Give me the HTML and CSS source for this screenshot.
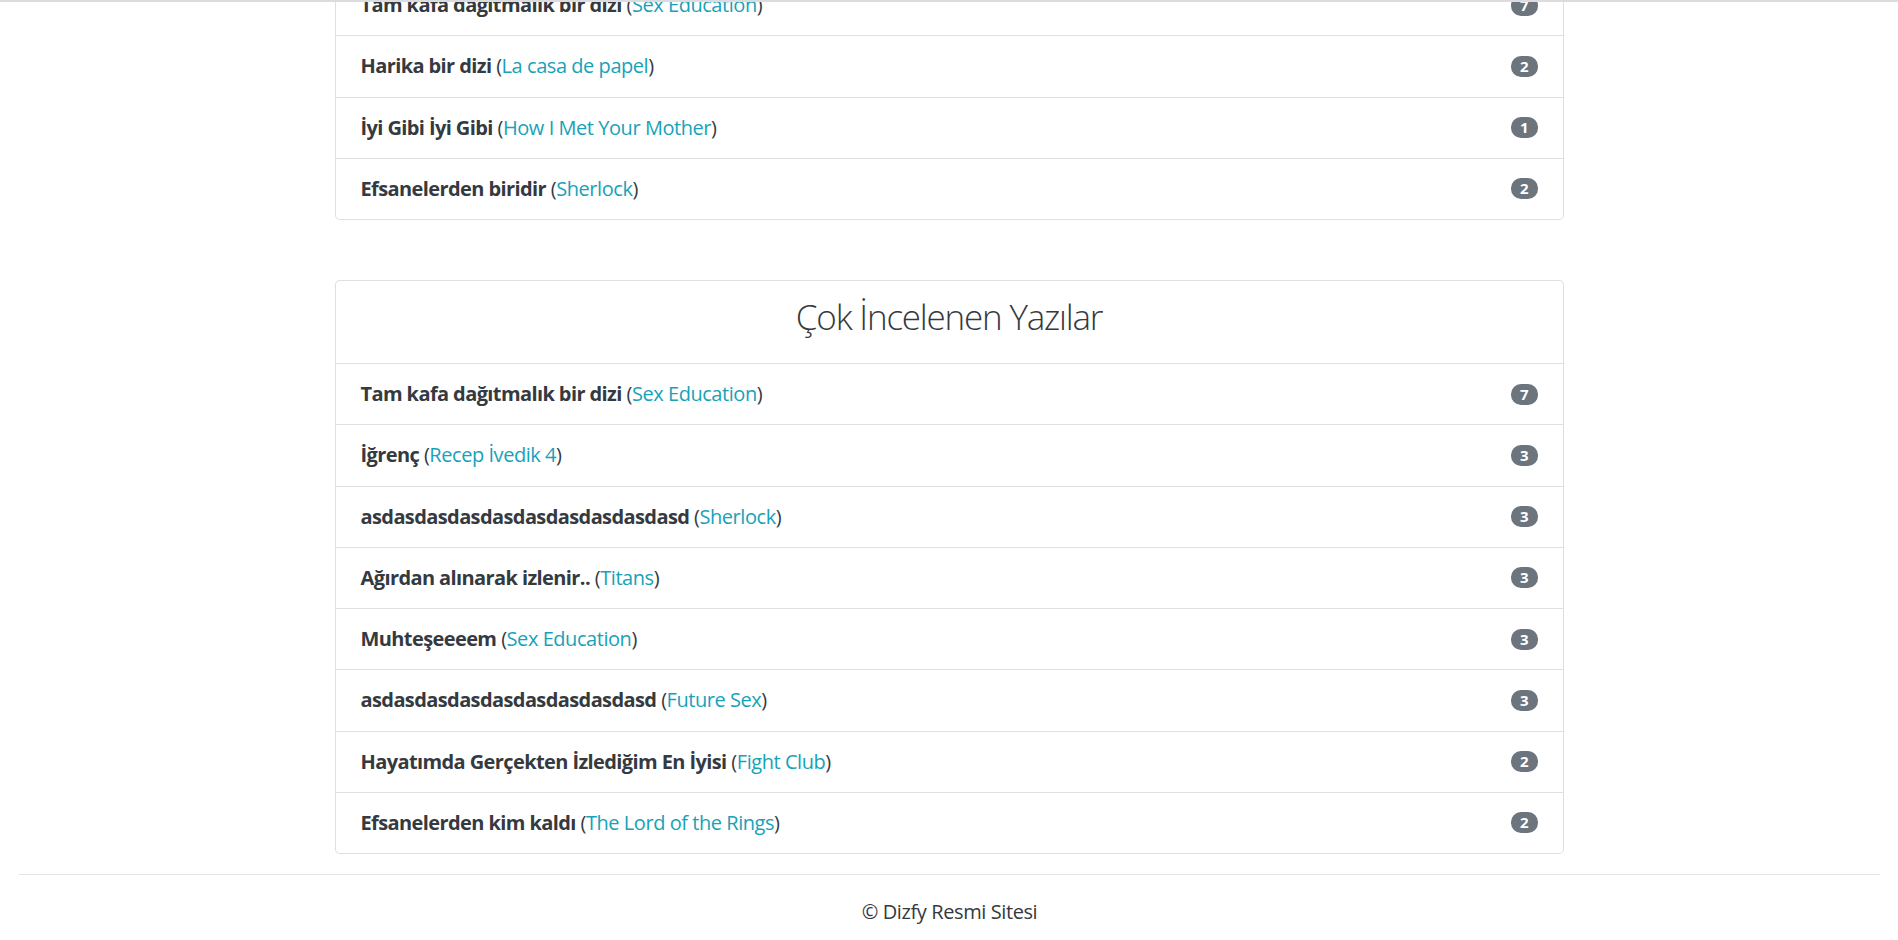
FILE: index.html
```html
<!DOCTYPE html>
<html lang="tr">
<head>
<meta charset="utf-8">
<title>Dizfy</title>
<link rel="stylesheet" href="styles.css">
</head>
<body>
<div class="topline"></div>
<div class="page">
  <main class="content">
    <section class="card">
      <ul class="list">
        <li class="item"><span class="entry"><b>Tam kafa dağıtmalık bir dizi</b> (<a href="#">Sex Education</a>)</span><span class="badge">7</span></li>
        <li class="item"><span class="entry"><b>Harika bir dizi</b> (<a href="#">La casa de papel</a>)</span><span class="badge">2</span></li>
        <li class="item"><span class="entry"><b>İyi Gibi İyi Gibi</b> (<a href="#">How I Met Your Mother</a>)</span><span class="badge">1</span></li>
        <li class="item"><span class="entry"><b>Efsanelerden biridir</b> (<a href="#">Sherlock</a>)</span><span class="badge">2</span></li>
      </ul>
    </section>
    <section class="card card-gap">
      <header class="card-header"><h3 class="card-title">Çok İncelenen Yazılar</h3></header>
      <ul class="list">
        <li class="item"><span class="entry"><b>Tam kafa dağıtmalık bir dizi</b> (<a href="#">Sex Education</a>)</span><span class="badge">7</span></li>
        <li class="item"><span class="entry"><b>İğrenç</b> (<a href="#">Recep İvedik 4</a>)</span><span class="badge">3</span></li>
        <li class="item"><span class="entry"><b>asdasdasdasdasdasdasdasdasdasd</b> (<a href="#">Sherlock</a>)</span><span class="badge">3</span></li>
        <li class="item"><span class="entry"><b>Ağırdan alınarak izlenir..</b> (<a href="#">Titans</a>)</span><span class="badge">3</span></li>
        <li class="item"><span class="entry"><b>Muhteşeeeem</b> (<a href="#">Sex Education</a>)</span><span class="badge">3</span></li>
        <li class="item"><span class="entry"><b>asdasdasdasdasdasdasdasdasd</b> (<a href="#">Future Sex</a>)</span><span class="badge">3</span></li>
        <li class="item"><span class="entry"><b>Hayatımda Gerçekten İzlediğim En İyisi</b> (<a href="#">Fight Club</a>)</span><span class="badge">2</span></li>
        <li class="item"><span class="entry"><b>Efsanelerden kim kaldı</b> (<a href="#">The Lord of the Rings</a>)</span><span class="badge">2</span></li>
      </ul>
    </section>
  </main>
  <footer class="footer">
    <hr class="rule">
    <p class="copy">© Dizfy Resmi Sitesi</p>
  </footer>
</div>
</body>
</html>
```
FILE: styles.css
```css
* { box-sizing: border-box; }
html, body { margin: 0; padding: 0; }
body {
  font-family: "Open Sans", "Noto Sans", "Liberation Sans", sans-serif;
  font-size: 20px;
  line-height: 1.5;
  color: #343a40;
  background: #fff;
  height: 940px;
  overflow: hidden;
}
.topline {
  position: fixed;
  top: 0; left: 0; right: 0;
  height: 2px;
  background: #dcdcde;
  z-index: 10;
}
.page {
  height: 940px;
  display: flex;
  flex-direction: column;
  justify-content: flex-end;
  overflow: hidden;
}
.content, .footer { flex-shrink: 0; }
.content {
  width: 1229px;
  margin: 0 auto;
}
.card {
  border: 1px solid rgba(0,0,0,.125);
  border-radius: 5px;
  background: #fff;
}
.card-gap { margin-top: 60px; }
.card-header {
  padding: 15px 25px;
  border-bottom: 1px solid rgba(0,0,0,.125);
  text-align: center;
}
.card-title {
  margin: 0 0 10px;
  font-size: 35px;
  font-weight: 300;
  line-height: 1.2;
  color: #343a40;
  letter-spacing: -1.2px;
}
.list { list-style: none; margin: 0; padding: 0; }
.item {
  display: flex;
  align-items: center;
  justify-content: space-between;
  padding: 15px 25px;
  border-top: 1px solid rgba(0,0,0,.125);
  height: 61.25px;
}
.list .item:first-child { border-top: 0; height: 60.25px; }
.entry { letter-spacing: -0.45px; }
.entry b { font-weight: 700; letter-spacing: -0.6px; }
.entry a { color: #17a2b8; text-decoration: none; }
.badge {
  display: inline-block;
  background: #6c757d;
  color: #fff;
  font-size: 15px;
  font-weight: 700;
  line-height: 1;
  padding: 3px 9px;
  border-radius: 10px;
  min-width: 26px;
  text-align: center;
}
.footer { padding: 0 18px 0 19px; }
.rule {
  margin: 20px 0 22px;
  border: 0;
  border-top: 1px solid rgba(0,0,0,.1);
}
.copy {
  margin: 0 0 13px;
  text-align: center;
  line-height: 30px;
  color: #343a40;
  letter-spacing: -0.4px;
}
```
